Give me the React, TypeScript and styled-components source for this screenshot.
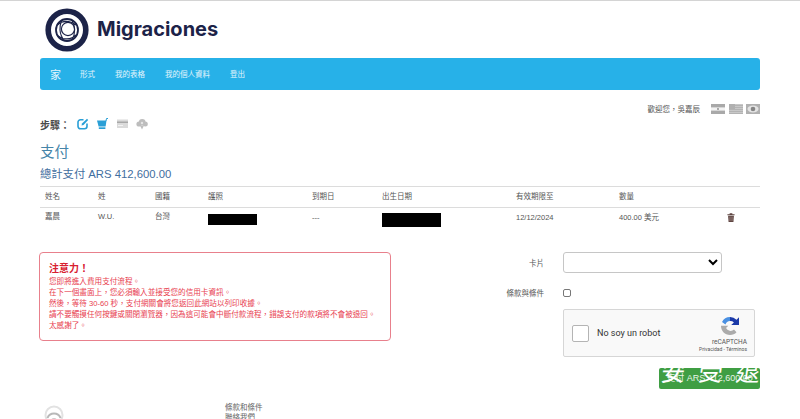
import React from "react";
import styled, { createGlobalStyle } from "styled-components";

const CJK = `"Liberation Sans", "Noto Sans CJK TC", sans-serif`;

const Global = createGlobalStyle`
  html, body { margin: 0; padding: 0; background: #fff; height: 419px; overflow: hidden; }
  body { font-family: ${CJK}; color: #555; }
`;

const Page = styled.div`
  position: relative;
  width: 800px;
  height: 419px;
  overflow: hidden;
  box-sizing: border-box;
  border-top: 1px solid #d4d4d4;
  padding: 0 40px;
`;
const Brand = styled.header`
  display: flex;
  align-items: center;
  gap: 8px;
  height: 57px;
  padding: 0 0 0 5px;
  box-sizing: border-box;
`;
const BrandName = styled.span`
  font-family: Inter, "Liberation Sans", sans-serif;
  font-weight: 700;
  font-size: 20px;
  color: #1c2348;
  margin-top: -2px;
`;
const Nav = styled.nav`
  display: flex;
  align-items: center;
  height: 32px;
  background: #27b1e8;
  border-radius: 3px;
  padding: 0 0 0 10px;
  color: #e4f5fc;
`;
const NavHome = styled.span`
  font-size: 11px;
  margin-right: 19px;
`;
const NavItem = styled.span`
  font-size: 7.5px;
  margin-right: 20px;
  margin-top: -1px;
`;
const Welcome = styled.div`
  display: flex;
  justify-content: flex-end;
  align-items: center;
  height: 11px;
  margin-top: 13px;
  font-size: 7.5px;
  color: #555;
`;
const WelcomeText = styled.span`
  margin-right: 11px;
`;
const Flags = styled.span`
  display: flex;
  gap: 3.5px;
`;
const Steps = styled.div`
  display: flex;
  align-items: center;
  height: 14px;
  margin-top: 3px;
`;
const StepsLabel = styled.span`
  font-size: 10px;
  font-weight: 700;
  color: #4a4a4a;
  width: 37px;
`;
const StepIcons = styled.span`
  display: flex;
  gap: 8px;
`;
const Title = styled.h1`
  margin: 11px 0 0;
  font-size: 14.5px;
  line-height: 20px;
  font-weight: 400;
  color: #4584a8;
`;
const Subtitle = styled.h2`
  margin: 5px 0 0;
  font-size: 11.3px;
  line-height: 15px;
  font-weight: 400;
  color: #3f6ea0;
`;
const Table = styled.div`
  margin-top: 4px;
  border-top: 1px solid #dcdcdc;
  width: 720px;
`;
const Row = styled.div<{ $header?: boolean }>`
  display: grid;
  grid-template-columns: 53px 57px 53px 104px 70px 134px 103px 108px 1fr;
  align-items: start;
  height: ${(p) => (p.$header ? "20px" : "24px")};
  border-bottom: ${(p) => (p.$header ? "1px solid #dcdcdc" : "none")};
  font-size: 7.5px;
  line-height: 12px;
  color: #555;
  padding-left: 5px;
`;
const Cell = styled.span<{ $top: number }>`
  display: block;
  margin-top: ${(p) => p.$top}px;
`;
const Redaction = styled.span<{ $w: number; $h: number; $top: number }>`
  display: block;
  width: ${(p) => p.$w}px;
  height: ${(p) => p.$h}px;
  background: #000;
  margin-top: ${(p) => p.$top}px;
`;
const TrashWrap = styled.span`
  display: block;
  margin-top: 5px;
`;
const Lower = styled.div`
  display: flex;
  justify-content: space-between;
  margin-top: 20px;
`;
const Alert = styled.div`
  width: 352px;
  height: 89px;
  box-sizing: border-box;
  border: 1px solid #e8808c;
  border-radius: 4px;
  padding: 9px 9px;
  margin-left: -1px;
  color: #e8404f;
  font-size: 7.6px;
  line-height: 11px;
`;
const AlertTitle = styled.div`
  font-size: 10px;
  font-weight: 700;
  line-height: 14px;
  color: #d8202f;
`;
const Form = styled.div`
  width: 255px;
  display: flex;
  flex-direction: column;
`;
const Field = styled.div`
  display: grid;
  grid-template-columns: 39px 1fr;
  column-gap: 19px;
  align-items: center;
  font-size: 7.5px;
  color: #555;
`;
const FieldLabel = styled.span`
  text-align: right;
  white-space: nowrap;
  justify-self: end;
`;
const Select = styled.select`
  width: 159px;
  height: 21px;
  box-sizing: border-box;
  border: 1px solid #c6c6c6;
  border-radius: 3px;
  background: #fff;
  margin: 0;
`;
const Check = styled.span`
  display: block;
  width: 8px;
  height: 8px;
  box-sizing: border-box;
  border: 1px solid #777;
  border-radius: 2px;
`;
const CheckField = styled(Field)`
  margin-top: 14px;
`;
const Captcha = styled.div`
  display: flex;
  align-items: center;
  width: 192px;
  height: 48px;
  box-sizing: border-box;
  margin: 11px 0 0 58px;
  background: #f9f9f9;
  border: 1px solid #d6d6d6;
  border-radius: 2px;
  padding: 0 7px 0 8px;
`;
const CaptchaBox = styled.span`
  width: 17px;
  height: 17px;
  box-sizing: border-box;
  border: 1.5px solid #b4b4b4;
  border-radius: 2px;
  background: #fff;
`;
const CaptchaText = styled.span`
  font-family: Roboto, "Liberation Sans", sans-serif;
  font-size: 9px;
  color: #333;
  margin-left: 8px;
  flex: 1;
`;
const CaptchaBrand = styled.div`
  display: flex;
  flex-direction: column;
  align-items: flex-end;
  padding-top: 3px;
  font-family: Roboto, "Liberation Sans", sans-serif;
  color: #555;
`;
const CaptchaLogoSlot = styled.span`
  display: block;
  height: 20px;
  margin-right: 7px;
`;
const CaptchaName = styled.span`
  font-size: 6.5px;
  line-height: 8px;
  margin-top: 2px;
`;
const CaptchaLinks = styled.span`
  font-size: 5px;
  line-height: 7px;
  white-space: nowrap;
`;
const PayButton = styled.div`
  position: relative;
  align-self: flex-end;
  box-sizing: border-box;
  width: 101px;
  height: 21px;
  margin-top: 11px;
  background: #3f9e43;
  border-radius: 2px;
  color: #e8f5e8;
  font-size: 9px;
  line-height: 21px;
  text-align: center;
  white-space: nowrap;
`;
const Watermark = styled.span`
  position: absolute;
  left: 2px;
  top: -10px;
  width: 99px;
  display: flex;
  justify-content: space-between;
  font-size: 24px;
  line-height: 30px;
  color: #fff;
  font-weight: 400;
  transform: skewX(-8deg);
`;
const Footer = styled.footer`
  position: absolute;
  left: 44px;
  top: 402px;
  display: flex;
  width: 300px;
`;
const FooterLinks = styled.div`
  margin-left: 159px;
  font-size: 7.5px;
  line-height: 10px;
  color: #666;
`;

const Logo = () => (
  <svg width="44" height="44" viewBox="0 0 44 44">
    <circle cx="22" cy="22" r="18.800" fill="none" stroke="#1c2348" strokeWidth="5.600" />
    <g fill="none" stroke="#1c2348">
      <circle cx="22" cy="22" r="11" strokeWidth="1.800" />
      <circle cx="23" cy="21" r="6.600" strokeWidth="1.200" />
      <path d="M12 17c5-4 12-5 19 0M13 28c5 4 13 4 18-1M17 12c-3 6-3 14 2 20M27 12c3 6 4 13 0 20" strokeWidth="1.100" />
    </g>
  </svg>
);
const EditIcon = () => (
  <svg width="12" height="12" viewBox="0 0 12 12" fill="none" stroke="#2a9fd6" strokeWidth="1.600">
    <path d="M6.500 1.800H3.500A2.500 2.500 0 0 0 1 4.300v4a2.500 2.500 0 0 0 2.500 2.500h4a2.500 2.500 0 0 0 2.500-2.500V5.500" />
    <path d="M4.500 7.500l.5-2L10 .8l1.200 1.200-4.700 5z" fill="#2a9fd6" stroke="none" />
  </svg>
);
const CartIcon = () => (
  <svg width="12" height="12" viewBox="0 0 12 12">
    <path d="M0 2.500h9.500L8.600 8.500H1.600z" fill="#2a9fd6" />
    <path d="M9 3l.5-2.500h1.500" fill="none" stroke="#2a9fd6" strokeWidth="1" />
    <path d="M1.800 9.300h6.600v1.700H1.800z" fill="#2a9fd6" />
  </svg>
);
const CardIcon = () => (
  <svg width="11" height="12" viewBox="0 0 11 12">
    <rect x="0" y="1.500" width="11" height="8.500" fill="#dadada" />
    <rect x="0" y="3.500" width="11" height="1.500" fill="#a8a8a8" />
    <rect x="1" y="7" width="5" height="1" fill="#f2f2f2" />
  </svg>
);
const CloudIcon = () => (
  <svg width="12" height="12" viewBox="0 0 12 12">
    <g fill="#bdbdbd">
      <circle cx="3" cy="6" r="2.600" />
      <circle cx="6.200" cy="4.300" r="3.300" />
      <circle cx="9.300" cy="6" r="2.500" />
      <path d="M4 7.500h4L6 11.500z" />
    </g>
    <circle cx="6" cy="5" r="1.200" fill="#e4e4e4" />
  </svg>
);
const ArFlag = () => (
  <svg width="14" height="10" viewBox="0 0 14 10">
    <rect width="14" height="10" fill="#a9a9a9" />
    <rect y="3.400" width="14" height="3.200" fill="#f3f3f3" />
    <circle cx="7" cy="5" r="0.900" fill="#888" />
  </svg>
);
const UsFlag = () => (
  <svg width="14" height="10" viewBox="0 0 14 10">
    <rect width="14" height="10" fill="#c8c8c8" />
    <path d="M0 1.500h14M0 3.500h14M0 5.500h14M0 7.500h14M0 9.500h14" stroke="#adadad" strokeWidth="0.800" />
    <rect width="6" height="5" fill="#b0b0b0" />
  </svg>
);
const EyeFlag = () => (
  <svg width="14" height="10" viewBox="0 0 14 10">
    <rect width="14" height="10" fill="#b0b0b0" />
    <ellipse cx="7" cy="5" rx="5.500" ry="3.400" fill="#e4e4e4" />
    <circle cx="7" cy="5" r="2.300" fill="#858585" />
  </svg>
);
const Trash = () => (
  <svg width="8" height="9" viewBox="0 0 8 10" style={{ display: "block" }}>
    <path d="M0 1.500h8v1H0zM2.500 1.500V.3h3v1.200z" fill="#5e4440" />
    <path d="M.8 3h6.400L6.700 10H1.300z" fill="#5e4440" />
    <path d="M2.600 4v5M4 4v5M5.400 4v5" stroke="#b5a5a2" strokeWidth="0.500" />
  </svg>
);
const RecaptchaLogo = () => (
  <svg width="20" height="20" viewBox="0 0 20 20" style={{ display: "block" }}>
    <path d="M10 1a9 9 0 0 0-8 5l3.500 2.600A5 5 0 0 1 10 5z" fill="#4a90e2" />
    <path d="M10 1a9 9 0 0 1 6.500 2.700L19 1.200V9h-7.800l2.700-2.600A5 5 0 0 0 10 5z" fill="#1c3aa9" />
    <path d="M1 10c0 5 4 9 9 9 2.700 0 5-1 6.500-2.800L14 13.500A5 5 0 0 1 6 12l2.300-2.200H1z" fill="#ababab" />
  </svg>
);
const Emblem = () => (
  <svg width="22" height="22" viewBox="0 0 22 22" fill="none" stroke="#d0d0d0" strokeWidth="2" style={{ display: "block" }}>
    <circle cx="10" cy="12" r="8.500" stroke="#e2e2e2" />
    <path d="M3.500 15a7 7 0 0 1 13 0" stroke="#b8b8b8" />
    <circle cx="10" cy="18" r="3" fill="#cacaca" stroke="none" />
  </svg>
);

const headers = ["姓名", "姓", "國籍", "護照", "到期日", "出生日期", "有效期限至", "數量", ""];

export default function App() {
  return (
    <>
      <Global />
      <Page>
        <Brand>
          <Logo />
          <BrandName>Migraciones</BrandName>
        </Brand>
        <Nav>
          <NavHome>家</NavHome>
          <NavItem>形式</NavItem>
          <NavItem>我的表格</NavItem>
          <NavItem>我的個人資料</NavItem>
          <NavItem>登出</NavItem>
        </Nav>
        <Welcome>
          <WelcomeText>歡迎您，吳嘉辰</WelcomeText>
          <Flags>
            <ArFlag />
            <UsFlag />
            <EyeFlag />
          </Flags>
        </Welcome>
        <Steps>
          <StepsLabel>步驟：</StepsLabel>
          <StepIcons>
            <EditIcon />
            <CartIcon />
            <CardIcon />
            <CloudIcon />
          </StepIcons>
        </Steps>
        <Title>支付</Title>
        <Subtitle>總計支付 ARS 412,600.00</Subtitle>
        <Table>
          <Row $header>
            {headers.map((h, i) => (
              <Cell key={i} $top={4}>{h}</Cell>
            ))}
          </Row>
          <Row>
            <Cell $top={3}>嘉晨</Cell>
            <Cell $top={3}>W.U.</Cell>
            <Cell $top={3}>台灣</Cell>
            <Redaction $w={49} $h={11} $top={6} />
            <Cell $top={4}>---</Cell>
            <Redaction $w={59} $h={14} $top={5} />
            <Cell $top={4}>12/12/2024</Cell>
            <Cell $top={4}>400.00 美元</Cell>
            <TrashWrap>
              <Trash />
            </TrashWrap>
          </Row>
        </Table>
        <Lower>
          <Alert>
            <AlertTitle>注意力！</AlertTitle>
            您即將進入費用支付流程。<br />
            在下一個畫面上，您必須輸入並接受您的信用卡資訊。<br />
            然後，等待 30-60 秒，支付網關會將您返回此網站以列印收據。<br />
            請不要觸摸任何按鍵或關閉瀏覽器，因為這可能會中斷付款流程，錯誤支付的款項將不會被退回。<br />
            太感謝了。
          </Alert>
          <Form>
            <Field>
              <FieldLabel>卡片</FieldLabel>
              <Select aria-label="卡片" />
            </Field>
            <CheckField>
              <FieldLabel>條款與條件</FieldLabel>
              <Check />
            </CheckField>
            <Captcha>
              <CaptchaBox />
              <CaptchaText>No soy un robot</CaptchaText>
              <CaptchaBrand>
                <CaptchaLogoSlot>
                  <RecaptchaLogo />
                </CaptchaLogoSlot>
                <CaptchaName>reCAPTCHA</CaptchaName>
                <CaptchaLinks>Privacidad - Términos</CaptchaLinks>
              </CaptchaBrand>
            </Captcha>
            <PayButton>
              支付 ARS 412,600.00
              <Watermark>
                <span>安</span>
                <span>受</span>
                <span>退</span>
              </Watermark>
            </PayButton>
          </Form>
        </Lower>
        <Footer>
          <Emblem />
          <FooterLinks>
            條款和條件<br />
            聯絡我們
          </FooterLinks>
        </Footer>
      </Page>
    </>
  );
}
